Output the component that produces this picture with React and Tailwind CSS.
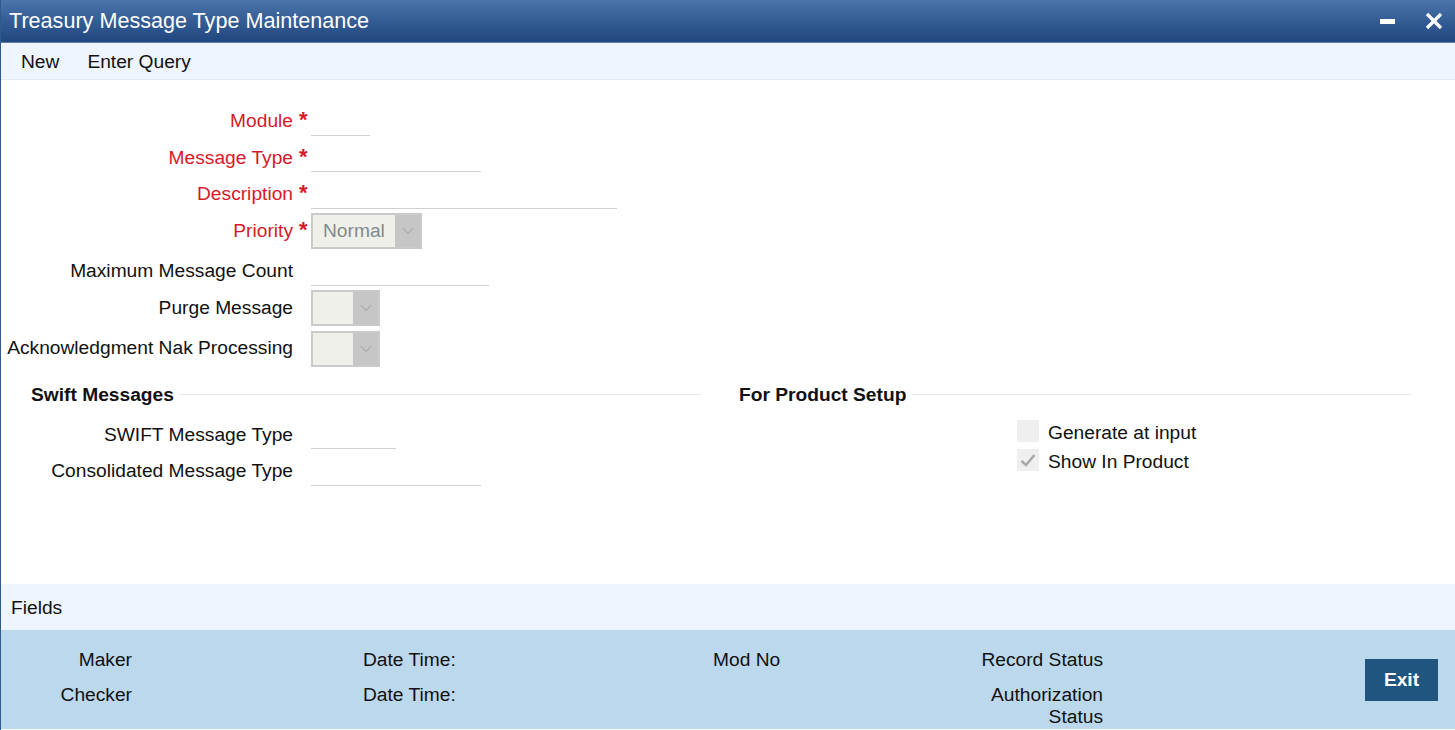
import React from 'react';
import { ChevronDown } from 'lucide-react';

const Label = ({ children, required, className = '' }) => (
  <div className={`w-[292px] shrink-0 text-right whitespace-nowrap relative ${required ? 'text-[#d7182a]' : 'text-[#111]'} ${className}`}>
    {children}
    {required && <span className="absolute left-[298px] top-[-4px] text-[22px] font-bold leading-[27px]">*</span>}
  </div>
);

const TextField = ({ label, required, width, height = 'h-9', labelClass = 'mt-[6px]' }) => (
  <div className={`flex ${height} items-center`}>
    <Label required={required} className={labelClass}>{label}</Label>
    <div className={`ml-[18px] h-full border-b border-[#d0d0d0] ${width}`} />
  </div>
);

const SelectField = ({ label, required, value, width, className = '', labelClass = '' }) => (
  <div className={`flex h-9 items-center ${className}`}>
    <Label required={required} className={labelClass}>{label}</Label>
    <div className={`ml-[18px] flex h-9 border-2 border-[#cacaca] bg-[#f0f0ea] ${width}`}>
      <div className="flex-1 pl-[10px] leading-8 text-[#7f8a8f]">{value}</div>
      <div className="flex w-[25px] items-center justify-center bg-[#c6c6c6] text-[#929292]">
        <ChevronDown size={20} strokeWidth={1} />
      </div>
    </div>
  </div>
);

const Section = ({ title, className = '' }) => (
  <div className={`flex items-center gap-[5px] ${className}`}>
    <span className="pt-px font-bold text-[#111] whitespace-nowrap">{title}</span>
    <div className="-mt-px h-px flex-1 bg-[#e8e8e8]" />
  </div>
);

const Check = ({ label, checked }) => (
  <div className="flex h-[22px] items-center gap-[9px]">
    <div className="flex h-[22px] w-[22px] items-center justify-center bg-[#efefef]">
      {checked && (
        <svg width="16" height="14" viewBox="0 0 16 14">
          <path d="M1.5 8 L6 12 L14.5 2" fill="none" stroke="#a8a8a8" strokeWidth="2.6" />
        </svg>
      )}
    </div>
    <span className="mt-1 text-[#111]">{label}</span>
  </div>
);

export default function App() {
  return (
    <div className="flex h-[730px] w-[1455px] flex-col overflow-hidden border-l border-[#2f5a8f] bg-white font-['Liberation_Sans',Arial,sans-serif] text-[19.2px] leading-[22px]">
      <div className="flex h-[43px] shrink-0 items-center justify-between border-b border-[#5b7fa8] bg-gradient-to-b from-[#4a74ab] to-[#20467f] pl-2 pr-[12px] -ml-px">
        <h1 className="pl-px text-[21.6px] font-normal text-white">Treasury Message Type Maintenance</h1>
        <div className="flex items-center gap-[30px] text-white">
          <div className="h-[5px] w-[15px] bg-white" />
          <svg width="18" height="18" viewBox="0 0 18 18">
            <path d="M2 2 L16 16 M16 2 L2 16" stroke="#fff" strokeWidth="3.2" />
          </svg>
        </div>
      </div>

      <div className="flex h-[37px] shrink-0 items-center gap-[28px] border-b border-[#e6e9ee] bg-[#eef5fe] pl-5 pt-px text-[#111]">
        <span>New</span>
        <span>Enter Query</span>
      </div>

      <div className="flex-1 pt-5">
        <TextField label="Module" required width="w-[59px]" />
        <TextField label="Message Type" required width="w-[170px]" labelClass="mt-[8px]" />
        <TextField label="Description" required width="w-[306px]" height="h-[37px]" />
        <SelectField label="Priority" required value="Normal" width="w-[111px]" className="mt-1" />
        <TextField label="Maximum Message Count" width="w-[178px]" height="h-[37px]" />
        <SelectField label="Purge Message" width="w-[69px]" className="mt-1" />
        <SelectField label="Acknowledgment Nak Processing" width="w-[69px]" className="mt-[5px]" labelClass="-mt-[3px]" />

        <div className="mt-4 flex pl-[30px]">
          <Section title="Swift Messages" className="w-[670px]" />
          <Section title="For Product Setup" className="ml-[38px] w-[672px]" />
        </div>

        <div className="flex">
          <div className="w-[1016px] pt-[7px]">
            <TextField label="SWIFT Message Type" width="w-[85px]" labelClass="mt-[8px]" />
            <TextField label="Consolidated Message Type" width="w-[170px]" height="h-[37px]" />
          </div>
          <div className="flex flex-col gap-[7px] pt-[14px]">
            <Check label="Generate at input" />
            <Check label="Show In Product" checked />
          </div>
        </div>
      </div>

      <div className="flex h-[46px] shrink-0 items-center bg-[#eef5fe] pl-[10px] pt-px text-[#111]">Fields</div>

      <div className="mb-px flex h-[99px] shrink-0 bg-[#bcd8ec] pt-[19px] text-[#111]">
        <div className="flex w-[131px] flex-col gap-[13px] text-right">
          <span>Maker</span>
          <span>Checker</span>
        </div>
        <div className="ml-[231px] flex w-[350px] flex-col gap-[13px]">
          <span>Date Time:</span>
          <span>Date Time:</span>
        </div>
        <div className="w-[260px] whitespace-nowrap">Mod No</div>
        <div className="flex w-[130px] flex-col gap-[13px] text-right">
          <span>Record Status</span>
          <span>Authorization Status</span>
        </div>
        <button className="ml-[262px] mt-[10px] h-[42px] w-[73px] bg-[#1f557f] font-bold text-white">Exit</button>
      </div>
    </div>
  );
}
